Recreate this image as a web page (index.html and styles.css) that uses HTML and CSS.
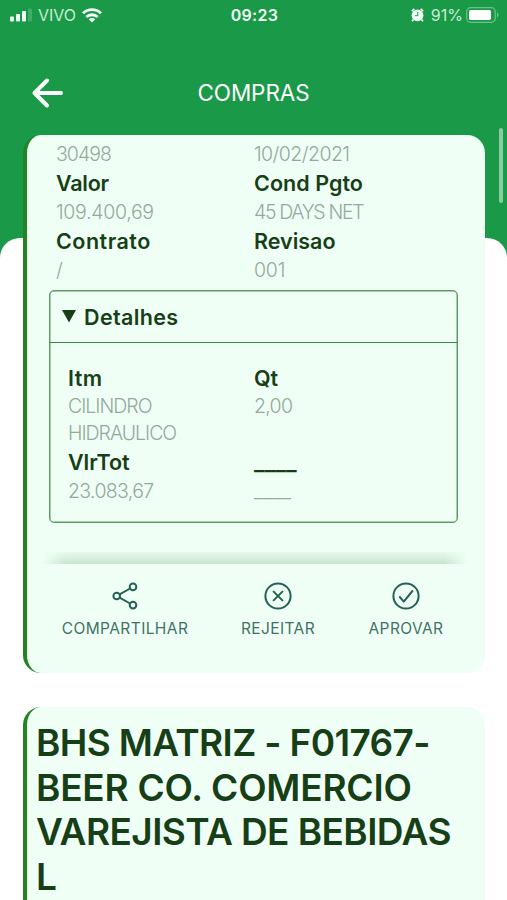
FILE: index.html
```html
<!DOCTYPE html>
<html lang="pt-BR">
<head>
<meta charset="utf-8">
<meta name="viewport" content="width=device-width, initial-scale=1">
<title>Compras</title>
<link rel="stylesheet" href="styles.css">
</head>
<body>
<div class="screen">
  <header class="status">
    <div class="status-left">
      <svg class="signal" width="23" height="14" viewBox="0 0 23 14" fill="#f0fff5"><rect x="0" y="8.500" width="4" height="5" rx="1"/><rect x="6" y="6" width="4" height="7.500" rx="1"/><rect x="12" y="3" width="4" height="10.500" rx="1"/><rect x="18" y="0.500" width="4" height="13" rx="1" opacity=".18"/></svg>
      <span class="carrier">VIVO</span>
      <svg class="wifi" width="20" height="15" viewBox="0 0 20 15" fill="none" stroke="#f4fff8" stroke-width="2.800"><path d="M1 5.300a13 13 0 0 1 18 0"/><path d="M4.300 9a8.300 8.300 0 0 1 11.400 0"/><path d="M10 14.500 6.800 11.300a4.600 4.600 0 0 1 6.400 0z" fill="#f4fff8" stroke="none"/></svg>
    </div>
    <time class="clock">09:23</time>
    <div class="status-right">
      <svg class="alarm" width="13" height="14" viewBox="0 0 13 14"><path d="M.8 3.200 3.300.9M12.200 3.200 9.700.9M2.500 11.500 1 13.200M10.500 11.500 12 13.200" stroke="#f0fff5" stroke-width="1.700" fill="none"/><circle cx="6.500" cy="7.300" r="5.900" fill="#f0fff5"/><path d="M6.800 4v3.700H4" stroke="#1a9948" stroke-width="1" fill="none"/></svg>
      <span class="percent">91%</span>
      <svg class="battery" width="33" height="16" viewBox="0 0 33 16"><rect x=".7" y=".7" width="28.600" height="14.600" rx="4" fill="none" stroke="#6fc08a" stroke-width="1.200"/><rect x="3" y="3" width="22" height="10" rx="1.800" fill="#fff"/><path d="M31 5.500c2 .7 2 4.300 0 5z" fill="#6fc08a"/></svg>
    </div>
  </header>
  <nav class="navbar">
    <button class="back" aria-label="Voltar"><svg width="32" height="30" viewBox="0 0 32 30" fill="none" stroke="#fff" stroke-width="3.900" stroke-linecap="round" stroke-linejoin="round"><path d="M29 15H2.500M15 2.500 2.500 15 15 27.500"/></svg></button>
    <h1 class="title">COMPRAS</h1>
  </nav>
  <div class="scrollbar"></div>
  <main class="sheet">
    <article class="card order">
      <dl class="fields">
        <div class="field"><dd class="v-num">30498</dd></div>
        <div class="field"><dd class="v-date">10/02/2021</dd></div>
        <div class="field"><dt class="k-valor">Valor</dt><dd class="v-total">109.400,69</dd></div>
        <div class="field"><dt class="k-cond">Cond Pgto</dt><dd class="v-cond">45 DAYS NET</dd></div>
        <div class="field"><dt class="k-contrato">Contrato</dt><dd>/</dd></div>
        <div class="field"><dt class="k-revisao">Revisao</dt><dd class="v-rev">001</dd></div>
      </dl>
      <section class="details">
        <h2 class="details-head"><svg width="14" height="13" viewBox="0 0 14 13"><path d="M0 0h14L7 12.500z" fill="#173f17"/></svg><span>Detalhes</span></h2>
        <dl class="detail-fields">
          <div class="field"><dt class="k-itm">Itm</dt><dd class="v-item">CILINDRO<br>HIDRAULICO</dd></div>
          <div class="field"><dt class="k-qt">Qt</dt><dd class="v-qt">2,00</dd></div>
          <div class="field"><dt class="k-vlr">VlrTot</dt><dd class="v-vlr">23.083,67</dd></div>
          <div class="field"><dt class="k-blank">____</dt><dd class="v-blank">____</dd></div>
        </dl>
      </section>
      <div class="shade"></div>
      <footer class="actions">
        <button class="action share"><svg width="26" height="28" viewBox="0 0 26 28" fill="none" stroke="#236255" stroke-width="2"><circle cx="4.700" cy="14" r="3.300"/><circle cx="21" cy="4.900" r="3.300"/><circle cx="21" cy="23.100" r="3.300"/><path d="m7.600 12.400 10.500-5.900M7.600 15.600l10.500 5.900"/></svg><span>COMPARTILHAR</span></button>
        <button class="action reject"><svg width="28" height="28" viewBox="0 0 28 28" fill="none" stroke="#236255" stroke-width="2" stroke-linecap="round"><circle cx="14" cy="14" r="12.600"/><path d="m9.600 9.600 8.800 8.800M18.400 9.600l-8.800 8.800"/></svg><span>REJEITAR</span></button>
        <button class="action approve"><svg width="28" height="28" viewBox="0 0 28 28" fill="none" stroke="#236255" stroke-width="2" stroke-linecap="round" stroke-linejoin="round"><circle cx="14" cy="14" r="12.600"/><path d="m7.800 15 4 4.600L20.400 9"/></svg><span>APROVAR</span></button>
      </footer>
    </article>
    <article class="card next">
      <h2 class="supplier"><span class="s1">BHS MATRIZ - F01767-</span><span class="s2">BEER CO. COMERCIO</span><span class="s3">VAREJISTA DE BEBIDAS</span><span>L</span></h2>
    </article>
  </main>
</div>
</body>
</html>
```
FILE: styles.css
```css
* { box-sizing: border-box; }
body { margin: 0; background: #1a9948; font-family: Inter, "Liberation Sans", sans-serif; }
h1, h2, dl, dt, dd { margin: 0; font-weight: 400; }
button { border: 0; padding: 0; background: none; font: inherit; color: inherit; }
svg { display: block; flex: none; }
.screen { position: relative; height: 900px; overflow: hidden; display: flex; flex-direction: column; }

.status { height: 30px; flex: none; display: grid; grid-template-columns: 1fr auto 1fr; align-items: center; padding: 0 8px 0 10px; color: #c8ecd3; white-space: nowrap; }
.status-left, .status-right { display: flex; align-items: center; }
.status-right { justify-content: flex-end; }
.carrier { margin: 0 6px 0 5px; font-size: 16px; }
.clock { color: #f0fff5; font-size: 16px; font-weight: 600; letter-spacing: .3px; }
.percent { margin: 0 3px 0 7px; font-size: 16px; }

.navbar { height: 208px; flex: none; display: grid; grid-template-columns: 64px 1fr 64px; padding-top: 47px; align-items: start; }
.back { margin: 0 0 0 32px; height: 32px; width: 32px; }
.title { color: #fff; font-size: 22.500px; line-height: 32px; text-align: center; letter-spacing: -.1px; }
.scrollbar { position: absolute; right: 4px; top: 128px; width: 4px; height: 75px; border-radius: 2px; background: #88cc9f; }

.sheet { flex: 1; background: #fff; border-radius: 20px 20px 0 0; padding: 0 22px 0 23px; }
.card { background: #f0fff5; border-left: 4px solid #228423; border-radius: 18px; }
.order { height: 538px; margin-top: -103px; padding: 5px 18px 0 23px; display: flex; flex-direction: column; }
.fields { display: grid; grid-template-columns: 198px 1fr; padding-left: 6px; }
dt { padding: 1px 0; color: #173f17; font-size: 21.500px; font-weight: 600; line-height: 28px; white-space: nowrap; }
dd { color: #93aa9b; font-size: 19.500px; font-weight: 300; line-height: 28px; white-space: nowrap; }
.v-item, .v-qt { line-height: 27px; }

/* Tracking per field */
.v-num { letter-spacing: -.950px; }
.v-date { letter-spacing: -.550px; }
.v-total { letter-spacing: -.300px; }
.v-cond { letter-spacing: -1.350px; }
.v-rev { letter-spacing: -.200px; }
.v-item { letter-spacing: -1px; }
.v-qt { letter-spacing: -.700px; }
.v-vlr { letter-spacing: -.650px; }
.k-valor { letter-spacing: -.250px; }
.k-cond { letter-spacing: .050px; }
.k-contrato { letter-spacing: .500px; }
.k-itm { letter-spacing: .450px; }
.k-vlr { letter-spacing: -.050px; }
.k-blank { font-size: 23px; font-weight: 500; }
.v-blank { font-size: 20.700px; }

.details { width: 409px; height: 233px; margin: 6px 0 0 -1px; border: 1px solid #5d9d64; box-shadow: inset 0 0 0 .5px #5d9d64; border-radius: 5px; flex: none; }
.details-head { display: flex; align-items: center; gap: 8px; height: 52px; padding-left: 12px; border-bottom: 1px solid #398642; color: #173f17; font-size: 21.500px; font-weight: 600; letter-spacing: .350px; }
.detail-fields { display: grid; grid-template-columns: 186px 1fr; padding: 20px 0 0 18px; }
.shade { height: 12px; flex: none; margin: 29px -1px 0 -8px; background: linear-gradient(#e8f9ed, #c6e5d0); -webkit-mask-image: linear-gradient(90deg, transparent, #000 24px, #000 calc(100% - 24px), transparent); mask-image: linear-gradient(90deg, transparent, #000 24px, #000 calc(100% - 24px), transparent); }
.actions { display: flex; padding: 18px 0 0 12px; color: #427267; font-size: 15.500px; }
.action { display: flex; flex-direction: column; align-items: center; gap: 8px; line-height: 21px; white-space: nowrap; letter-spacing: .400px; }
.share { width: 126px; }
.reject { width: 76px; margin-left: 52px; }
.approve { width: 76px; margin-left: 52px; }

.next { height: 230px; margin-top: 34px; padding: 14px 0 0 9px; }
.supplier { display: flex; flex-direction: column; align-items: flex-start; color: #173f17; font-size: 37px; font-weight: 600; line-height: 44.700px; white-space: nowrap; }
.s1 { letter-spacing: -.650px; }
.s2 { letter-spacing: -.220px; }
.s3 { letter-spacing: -.580px; }
```
